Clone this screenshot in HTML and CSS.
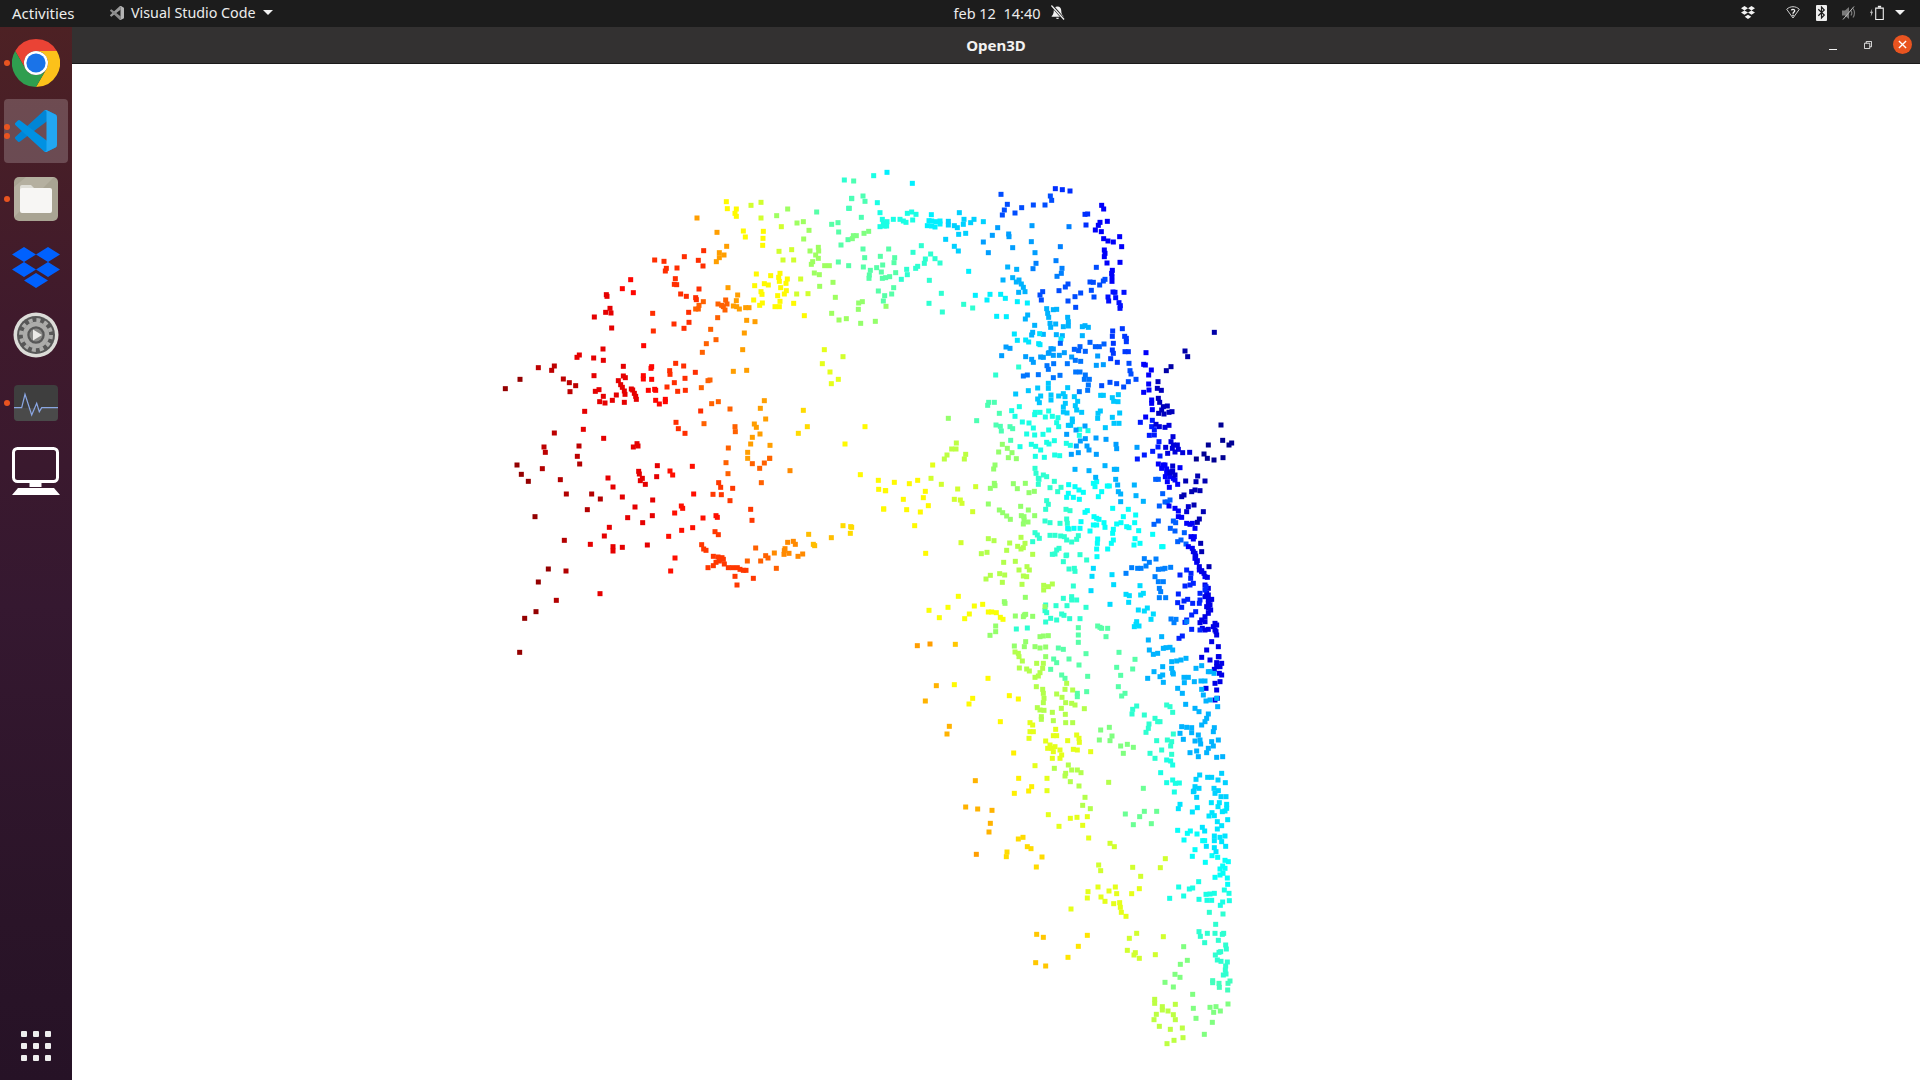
FILE: index.html
```html
<!DOCTYPE html>
<html lang="en">

<head>
    <meta charset="UTF-8" />
    <title>Open3D</title>
    <link rel="stylesheet" href="styles.css">
</head>

<body>
    <!-- Top bar -->
    <header class="topbar">
        <div class="topbar-left">
            <span class="activities">Activities</span>
            <span class="app-menu">
                <svg class="app-menu-icon" viewBox="0 0 100 100">
                    <path fill="#9a9a9a" d="M96.46 10.8 75.86.87a6.23 6.23 0 0 0-7.1 1.2L1.33 63.6a4.17 4.17 0 0 0 0 6.15l5.5 5a4.17 4.17 0 0 0 5.32.24L75 27V4.65z" />
                    <path fill="#8a8a8a" d="M75 73 12.15 25a4.17 4.17 0 0 0-5.32.24l-5.5 5a4.17 4.17 0 0 0 0 6.15l67.43 61.53a6.23 6.23 0 0 0 7.1 1.2L75 99z" />
                    <path fill="#b4b4b4" d="M75.86 99.13a6.23 6.23 0 0 1-7.1-1.2c2.3 2.3 6.24.67 6.24-2.58V4.65c0-3.25-3.94-4.88-6.24-2.58a6.23 6.23 0 0 1 7.1-1.2l20.6 9.9A6.25 6.25 0 0 1 100 16.4v67.2a6.25 6.25 0 0 1-3.54 5.63z" />
                </svg>
                Visual Studio Code
                <span class="caret"></span>
            </span>
        </div>
        <div class="clock">
            <span class="clock-text">feb 12&nbsp;&nbsp;14:40</span>
            <svg class="bell" viewBox="0 0 16 16">
                <path fill="#f2f2f2" d="M8 1.5c-2.6 0-4 2-4 4.500 0 3-1 4.500-2.200 5.700v.8h12.400v-.8C13 10.500 12 9 12 6c0-2.500-1.400-4.500-4-4.500z" />
                <path fill="#f2f2f2" d="M6.500 13.500h3a1.500 1.500 0 0 1-3 0z" />
                <path stroke="#1c1c1c" stroke-width="3" d="M1.500 0 15.500 16" />
                <path stroke="#f2f2f2" stroke-width="1.300" d="M1.500 .5 15 15.500" />
            </svg>
        </div>
        <div class="tray">
            <svg class="tray-dropbox" viewBox="0 0 14 13">
                <path fill="#f2f2f2" d="M3.500 0 7 2.200 3.500 4.400 0 2.200zM10.500 0 14 2.200 10.500 4.400 7 2.200zM3.500 4.400 7 6.600 3.500 8.800 0 6.600zM10.500 4.400 14 6.600 10.500 8.800 7 6.600zM7 8.800 10.300 10.800 7 13 3.700 10.800z" />
            </svg>
            <svg class="tray-wifi" viewBox="0 0 14 13">
                <path fill="none" stroke="#cfcfcf" stroke-width="1" d="M.7 3.300C2.500 1.600 4.600.7 7 .7s4.500.9 6.300 2.600L7 12z" />
                <path fill="none" stroke="#f2f2f2" stroke-width="1.300" d="M5.400 4.300C5.700 3.200 8.500 3 8.700 4.700 8.800 6 7 6 7 7.800" />
                <rect fill="#f2f2f2" x="6.300" y="8.700" width="1.400" height="1.400" />
            </svg>
            <span class="tray-bluetooth">
                <svg viewBox="0 0 11 15">
                    <path fill="none" stroke="#1c1c1c" stroke-width="1.200" d="M2.300 4.300 8.300 10 5.500 13V2L8.300 5 2.300 10.700" />
                </svg>
            </span>
            <svg class="tray-volume" viewBox="0 0 15 14">
                <path fill="#7a7a7a" d="M0 4.500h3L7 1v12L3 9.500H0z" />
                <path fill="none" stroke="#7a7a7a" stroke-width="1.200" d="M9 4.500c1 1.500 1 3.500 0 5M11 2.500c2 3 2 6 0 9" />
                <path stroke="#bdbdbd" stroke-width="1" d="M1 13.500 12 .5" />
            </svg>
            <span class="tray-battery">
                <svg class="bolt" viewBox="0 0 4 11">
                    <path fill="#bdbdbd" d="M3 0 0 6h1.500L1 11l3-6.500H2.300z" />
                </svg>
                <svg class="battery" viewBox="0 0 10 16">
                    <path fill="none" stroke="#f2f2f2" stroke-width="1.200" d="M.8 2.600h8.400v12.600H.8z" />
                    <rect fill="#f2f2f2" x="3.200" y="0" width="3.600" height="2" />
                </svg>
            </span>
            <span class="caret caret-tray"></span>
        </div>
    </header>

    <div class="desktop">
        <!-- Dock -->
        <nav class="dock">
            <div class="dock-item">
                <span class="dots"><i></i></span>
                <svg class="icon-chrome" viewBox="0 0 48 48">
                    <path fill="#ea4335" d="M24 0A24 24 0 0 1 44.800 12H24A12 12 0 0 0 13.600 30L3.200 12A24 24 0 0 1 24 0z" />
                    <path fill="#fcc11a" d="M44.800 12A24 24 0 0 1 24 48L34.400 30A12 12 0 0 0 24 12z" />
                    <path fill="#2f9e4f" d="M3.200 12 13.600 30A12 12 0 0 0 34.400 30L24 48A24 24 0 0 1 3.200 12z" />
                    <circle cx="24" cy="24" r="12" fill="#fff" />
                    <circle cx="24" cy="24" r="9.600" fill="#1a73e8" />
                </svg>
            </div>
            <div class="dock-item">
                <span class="dock-active"></span>
                <span class="dots"><i></i><i></i></span>
                <svg class="icon-code" viewBox="0 0 100 100">
                    <path fill="#0085d6" d="M96.460 10.800 75.860.87a6.230 6.230 0 0 0-7.100 1.200L1.330 63.600a4.170 4.170 0 0 0 0 6.150l5.500 5a4.170 4.170 0 0 0 5.320.24L93.400 13.400a4.140 4.140 0 0 1 6.600 3.300v-.24a6.250 6.250 0 0 0-3.540-5.660z" />
                    <path fill="#0091e2" d="M96.460 89.200 75.860 99.130a6.230 6.230 0 0 1-7.100-1.200L1.330 36.400a4.170 4.170 0 0 1 0-6.150l5.500-5a4.170 4.170 0 0 1 5.320-.24L93.400 86.600a4.140 4.140 0 0 0 6.600-3.300v.24a6.250 6.250 0 0 1-3.540 5.660z" />
                    <path fill="#22a7f2" d="M75.860 99.130a6.230 6.230 0 0 1-7.100-1.200c2.300 2.300 6.240.67 6.240-2.580V4.650c0-3.250-3.940-4.880-6.240-2.580a6.230 6.230 0 0 1 7.100-1.200l20.600 9.900A6.250 6.250 0 0 1 100 16.400v67.200a6.250 6.250 0 0 1-3.540 5.630z" />
                </svg>
            </div>
            <div class="dock-item">
                <span class="dots"><i></i></span>
                <svg class="icon-files" viewBox="0 0 44 44">
                    <rect width="44" height="44" rx="5" fill="#a9a493" />
                    <path fill="#b5b0a0" d="M12 0h28l-40 40V10z" />
                    <path fill="#dfded7" d="M6 10a2 2 0 0 1 2-2h9l3 3v6H6z" />
                    <rect x="6" y="11" width="32" height="25" rx="2" fill="#f7f6f4" />
                </svg>
            </div>
            <div class="dock-item">
                <svg class="icon-dropbox" viewBox="0 0 48 41">
                    <path fill="#0061fe" d="M12 0 24 7.500 12 15 0 7.500zM36 0 48 7.500 36 15 24 7.500zM12 15 24 22.500 12 30 0 22.500zM36 15 48 22.500 36 30 24 22.500zM24 26 36 33.500 24 41 12 33.500z" />
                </svg>
            </div>
            <div class="dock-item">
                <svg class="icon-settings" viewBox="0 0 46 46">
                    <circle cx="23" cy="23" r="22.500" fill="#dcdcd8" />
                    <circle cx="23" cy="23" r="19" fill="#575757" />
                    <circle cx="23" cy="23" r="15" fill="none" stroke="#acacaa" stroke-width="4" stroke-dasharray="4 3.850" />
                    <circle cx="23" cy="23" r="11" fill="none" stroke="#acacaa" stroke-width="4.500" />
                    <circle cx="23" cy="23" r="6.500" fill="#8a8a88" />
                    <path fill="#ecebe8" d="M20 17.500 29 23l-9 5.500z" />
                </svg>
            </div>
            <div class="dock-item">
                <span class="dots"><i></i></span>
                <svg class="icon-monitor" viewBox="0 0 44 36">
                    <rect width="44" height="36" rx="4" fill="#3e3e3e" />
                    <path fill="#4a4a4a" d="M0 23h44v9a4 4 0 0 1-4 4H4a4 4 0 0 1-4-4z" />
                    <path fill="none" stroke="#8aa6e2" stroke-width="1.200" d="M0 22.700H7.700L11 9.300 17.700 30 22.700 18.300 25.300 26.700 27.700 22.700H44" />
                </svg>
            </div>
            <div class="dock-item">
                <svg class="icon-display" viewBox="0 0 48 48">
                    <rect x="1.500" y="1.500" width="44" height="33" rx="4" fill="none" stroke="#fff" stroke-width="3" />
                    <rect x="17.500" y="36" width="12" height="4" fill="#fff" />
                    <path fill="#fff" d="M6 41h36l6 7H0z" />
                </svg>
            </div>
            <div class="dock-item dock-apps">
                <div class="apps-grid">
                    <i></i><i></i><i></i>
                    <i></i><i></i><i></i>
                    <i></i><i></i><i></i>
                </div>
            </div>
        </nav>

        <!-- Open3D window -->
        <main class="window">
            <div class="titlebar">
                <span class="title">Open3D</span>
                <div class="window-buttons">
                    <span class="btn-min"></span>
                    <svg class="btn-restore" viewBox="0 0 9 9">
                        <path fill="none" stroke="#f2f2f2" stroke-width="1" d="M.5 2.500h6v6h-6zM2.500 2.500v-2h6v6h-2" />
                    </svg>
                    <span class="btn-close">
                        <svg viewBox="0 0 10 10">
                            <path stroke="#fff" stroke-width="1.500" d="M1 1 9 9M9 1 1 9" />
                        </svg>
                    </span>
                </div>
            </div>
            <canvas id="cloud" class="cloud" width="1848" height="1016"></canvas>
        </main>
    </div>
    <script src="cloud.js"></script>
</body>

</html>
```

FILE: styles.css
```css
* {
    box-sizing: border-box;
}

html,
body {
    margin: 0;
    height: 100%;
    overflow: hidden;
}

body {
    display: flex;
    flex-direction: column;
    font-family: 'Noto Sans', 'Open Sans', sans-serif;
    background: #fff;
}

svg {
    display: block;
}

/* Top bar */
.topbar {
    height: 27px;
    flex-shrink: 0;
    display: grid;
    grid-template-columns: 1fr auto 1fr;
    align-items: center;
    padding-bottom: 2px;
    background: #1c1c1c;
    color: #ececec;
    font-size: 14.500px;
}

.topbar-left {
    display: flex;
    align-items: center;
    padding-left: 12px;
}

.activities {
    width: 98px;
    font-size: 15px;
}

.app-menu {
    display: flex;
    align-items: center;
    gap: 7px;
    font-size: 14.300px;
}

.app-menu-icon {
    width: 14px;
    height: 14px;
}

.caret {
    width: 0;
    height: 0;
    border-left: 5px solid transparent;
    border-right: 5px solid transparent;
    border-top: 5px solid #f2f2f2;
}

.clock {
    display: flex;
    align-items: center;
    gap: 9px;
    padding-left: 98px;
}

.bell {
    width: 15px;
    height: 15px;
}

.tray {
    display: flex;
    align-items: center;
    justify-content: flex-end;
    padding-right: 15px;
}

.tray-dropbox {
    width: 14px;
    height: 13px;
    margin-right: 31px;
}

.tray-wifi {
    width: 14px;
    height: 13px;
    margin-right: 16px;
}

.tray-bluetooth {
    width: 11px;
    height: 16px;
    margin-right: 15px;
    background: #eee;
    border-radius: 1px;
}

.tray-volume {
    width: 15px;
    height: 14px;
    margin-right: 13px;
}

.tray-battery {
    display: flex;
    align-items: center;
    gap: 2px;
    margin-right: 11px;
}

.bolt {
    width: 3px;
    height: 11px;
}

.battery {
    width: 9px;
    height: 16px;
}

/* Dock and window */
.desktop {
    flex: 1;
    display: flex;
    min-height: 0;
}

.dock {
    width: 72px;
    flex-shrink: 0;
    display: flex;
    flex-direction: column;
    padding-top: 2px;
    background: linear-gradient(180deg, #4d2124 0%, #3f1a2c 28%, #351830 55%, #2a1428 85%, #261226 100%);
}

.dock-item {
    position: relative;
    height: 68px;
    display: flex;
    align-items: center;
    justify-content: center;
}

.dock-apps {
    margin-top: auto;
}

.dock-active {
    position: absolute;
    top: 2px;
    left: 4px;
    width: 64px;
    height: 64px;
    border-radius: 4px;
    background: rgba(255, 255, 255, 0.2);
}

.dots {
    position: absolute;
    left: 4px;
    top: 0;
    bottom: 0;
    display: flex;
    flex-direction: column;
    justify-content: center;
    gap: 3px;
}

.dots i {
    display: block;
    width: 6px;
    height: 6px;
    border-radius: 50%;
    background: #e95420;
}

.icon-chrome {
    width: 48px;
    height: 48px;
}

.icon-code {
    position: relative;
    width: 42px;
    height: 42px;
}

.icon-files {
    width: 44px;
    height: 44px;
}

.icon-dropbox {
    width: 48px;
    height: 41px;
}

.icon-settings {
    width: 46px;
    height: 46px;
}

.icon-monitor {
    width: 44px;
    height: 36px;
}

.icon-display {
    width: 48px;
    height: 48px;
}

.apps-grid {
    display: grid;
    grid-template-columns: repeat(3, 6px);
    grid-auto-rows: 6px;
    gap: 6px;
}

.apps-grid i {
    display: block;
    border-radius: 1px;
    background: #eee;
}

.window {
    flex: 1;
    display: flex;
    flex-direction: column;
    min-width: 0;
}

.titlebar {
    position: relative;
    height: 37px;
    flex-shrink: 0;
    display: flex;
    align-items: center;
    justify-content: center;
    background: #333131;
    border-bottom: 1px solid #1a1a1a;
}

.title {
    color: #f2f2f2;
    font-size: 15px;
    font-weight: 700;
}

.window-buttons {
    position: absolute;
    right: 8px;
    top: 8px;
    display: flex;
    align-items: center;
}

.btn-min {
    width: 8px;
    height: 1px;
    margin: 9px 27px 0 0;
    background: #f2f2f2;
}

.btn-restore {
    width: 8px;
    height: 8px;
    margin-right: 21px;
}

.btn-close {
    width: 19px;
    height: 19px;
    display: flex;
    align-items: center;
    justify-content: center;
    border-radius: 50%;
    background: #e95420;
}

.btn-close svg {
    width: 9px;
    height: 9px;
}

.cloud {
    display: block;
    width: 1848px;
    height: 1016px;
    background: #fff;
}
```

FILE: cloud.js
```js
// Point cloud read off the Open3D view, coloured with the jet colormap.
// Each section has its own origin; the coordinates in it are 3x page pixels.
// Groups are [t, [x, y, x, y, ...]] with t being the colormap position.
const sections = [
    { ox: 490, oy: 160, groups: [
        [0.98, [46,686,90,658]],
        [0.94, [145,623,185,631,193,618,220,657,238,668,257,677,240,695,193,819,162,861,166,877,267,858,262,889]],
        [0.9, [261,592,268,585,311,594,339,567,340,601,312,647,316,694,327,689,340,709,329,725,345,729,367,721,379,705,284,754,280,808,341,835,400,619,400,648,406,653,385,662,392,674,397,682,403,693,405,703,403,727,424,687,428,690,433,700,437,709,439,718,430,861,441,851,444,858,349,404,351,409,360,445,347,457,363,459,313,471,365,504]],
        [0.87, [422,359,397,386,430,398,475,691,460,647,460,657,485,620,483,625,485,658,494,688,497,691,497,721,508,732,526,718,526,725,461,557]],
        [0.83, [488,460,490,513,494,300,522,304,529,325,526,333,561,324,557,610,581,618,539,632,540,643,553,668,585,655,531,681,563,694,586,691,616,637,632,753,558,787,565,806,585,820,552,492,582,505,597,487,596,457,556,356,553,373,560,374,572,402,589,409,617,413,619,419,627,387,583,290,625,301,639,318,641,272]],
        [0.78, [637,577,649,551,662,508,678,539,634,683,654,662,660,660,665,731,685,725,720,747,642,791,735,800,736,815,715,864,627,436,625,447,617,447,640,425,684,432,695,436,700,440,705,450,711,432,707,420,683,473]],
        [0.72, [681,217,621,174,710,259,688,278,688,293,702,285,679,305,714,383,743,405,739,422,730,438,740,440,748,447,767,443,777,443,770,481,795,485,763,519,758,569,730,634,770,631,823,722,811,745,827,777,793,792,799,802,810,822,787,832,782,852,840,856,773,877,839,895,773,895]],
        [0.66, [925,820,952,800,940,751]],
        [0.63, [709,125,712,146,739,147,735,160,739,169,760,213,766,231,820,214,819,235,818,256,799,342,842,347,794,377,823,371,835,375,870,340,866,352,868,364,872,383,892,357,888,370,889,392,883,402,813,395,816,403,791,420,817,429,809,436,863,407,870,424,855,440,868,440,911,430,943,467,1065,852]],
        [0.6, [1003,569,997,611,1020,636,1024,671,1045,658]],
        [0.58, [783,136,813,127,813,174,874,200,920,402,954,401,867,274,905,269,879,300,911,300,932,357,1059,590]],
        [0.53, [860,167,893,147,921,189,940,185,957,211,941,237,960,273,985,262,986,273,977,285,985,295,968,305,964,313,1004,317,1018,317,973,339,988,344,989,379,1029,367,1036,412,1025,460,1047,480,1069,476]],
        [0.46, [980,156,1025,193,1044,188,1046,216,1053,255,1074,239,1045,306,1076,317]],
        [0.42, [1063,60,1085,115,1076,145]]
    ] },
    { ox: 490, oy: 400, groups: [
        [0.98, [81,195,94,223,115,244,135,350,89,757,104,655,138,635,145,546,175,507]],
        [0.95, [157,206,211,239,229,282,223,421,228,513,199,601,305,282,331,297,292,329,269,192]],
        [0.9, [354,234,369,261,397,291,358,382,343,408,301,433,369,440,369,453,397,442,330,581,413,353,435,321,458,368,487,347,488,300,446,214,448,222,457,235,451,242,466,253,500,230,502,197,472,435]],
        [0.86, [540,213,548,225,536,409,575,391,608,383,554,339,574,318,578,325,639,354,555,474,542,513,611,282,607,199,678,347,682,352]],
        [0.82, [675,395,685,404,635,434,641,447,648,451,670,469,684,471,696,473,700,478,688,483,678,487,670,497,654,503,703,492,715,503,728,503,742,503,750,508,760,511,768,511,735,529,741,555,790,535,686,248,692,262,669,283,694,284,720,302,728,265,782,328,786,361]],
        [0.78, [714,221,708,188,814,248,797,444,772,483,812,483,827,467,834,474,859,505,787,191,809,205,823,189,839,175]],
        [0.74, [853,459,882,463,885,446,883,452,897,460,924,469,938,462,893,427,910,424,916,433,900,212]],
        [0.69, [956,403,970,433,974,437,1024,413]],
        [0.66, [1059,377,1082,380,1085,382,1081,400]],
        [0.63, [1111,224,1165,241,1166,268,1187,272,1181,327]]
    ] },
    { ox: 820, oy: 160, groups: [
        [0.45, [101,63,95,116,129,108,135,124,88,145,124,172]],
        [0.4, [161,47,172,128,180,158,187,178,201,185,190,190,180,200,193,198,200,198,240,178,250,183,262,160,275,156,288,163,258,187,278,180,220,178]],
        [0.36, [201,37,277,70,334,164,327,182,335,183,322,197,335,198,345,201,348,185,360,183,360,192]],
        [0.33, [385,184,385,195,403,197,412,203,418,158,432,178,430,193,452,188,462,178,490,185,416,223,437,220,377,238,403,259,415,273]],
        [0.28, [533,203,517,226,490,246,505,278,566,222,567,230,578,263,636,197,634,245,645,278]],
        [0.2, [543,103,562,133,553,150,547,165,585,159,605,143,640,135,675,135,691,108,695,121]],
        [0.25, [747,200,721,260,708,302,648,310,726,325,724,340,711,349,639,326]],
        [0.17, [706,86,727,89,750,93,798,195,795,163,803,162]],
        [0.12, [845,136,851,147,840,187,835,196,826,210,844,215,851,236,864,243,880,246,862,184,899,230,905,260,853,270,855,280,853,290,900,307,861,309,877,331,875,340,876,350,876,364]],
        [0.2, [829,322,855,358,850,363,839,375,810,366,820,367,814,391,822,411,782,399,765,410,744,372,736,381,717,392,668,395,660,405,664,420,744,423,767,442]],
        [0.14, [879,396,885,397,912,397,864,411,866,423,887,413,897,428,901,437,900,445]],
        [0.3, [563,321,590,328,549,360,578,353,597,360,589,366,604,372,610,382,596,397,615,395]],
        [0.36, [446,334,542,403,556,415,510,403,466,406,501,420,592,425,622,429,530,469,559,470]],
        [0.42, [364,400,431,433,458,444,367,456,327,430,328,361,304,257,279,277,332,282,345,296,360,309,316,297,313,310,293,319,287,325,260,328,262,344,244,358]],
        [0.46, [206,267,129,267,134,293,181,289,224,293,222,308,188,315,170,323,151,331,148,345,147,355,187,355,197,353,209,350,227,338,184,336,130,321,221,383,175,393,194,407,215,402,190,423]],
        [0.5, [97,236,109,227,132,220,146,214,100,227]],
        [0.52, [198,439,127,425,116,429,115,448,166,484,122,490]],
        [0.3, [623,465,616,477,644,496,680,446,683,460,686,472,700,449,710,448,690,490,692,502,707,492,743,472,745,485,730,500,745,498,787,500,795,497,805,502,727,527,709,524,787,527,670,523,638,517,635,525]],
        [0.35, [583,522,659,521,723,537,592,541,617,540,626,546,656,551,660,554]],
        [0.22, [721,550,763,568,776,572,796,574,810,547,852,552,838,560,826,560,780,560]],
        [0.18, [878,513,877,529,907,506,914,529,919,535,919,545,880,550,877,570,880,580,872,596,892,607,915,575,925,575]],
        [0.28, [833,588,829,616,850,614,755,591,733,578,718,586,700,586,687,578,693,566,700,567,685,580,670,592,662,591,640,607,635,598,617,590,558,561,570,565,545,587]],
        [0.24, [782,604,742,611,766,601,701,611,681,617,685,628,720,646,700,653,655,644,622,645,610,648,767,636,780,636,796,645,793,658,808,658,805,675,803,691,778,695]],
        [0.42, [596,621,527,645]],
        [0.2, [927,610,930,632,933,642,948,658,925,665,890,671,870,667,911,681,845,677]],
        [0.32, [685,670,685,685,653,684,625,692,587,702,662,708,653,717,658,728,693,705,693,720,716,708,730,701,735,710,743,683,763,710,773,724,850,706,842,706,736,730,730,741,766,737,770,750,785,757,730,756,741,759,757,777,757,785,745,796,752,796,833,775,841,753,834,760,877,772,882,790,897,790,899,759,894,725,895,704,877,713,881,724,856,803]],
        [0.4, [598,740,575,752,585,769,646,757,660,757,644,764,676,771,686,753,697,769,714,773,710,788,716,800,607,786,627,789,640,804,644,825,620,822,669,823,686,810,779,808,804,812,778,826]],
        [0.45, [506,727,523,727,503,736,538,760,528,795,541,799,544,813,570,800,578,806,470,782,572,841]],
        [0.28, [740,823,795,798,768,810,796,836,781,843,828,834,858,838,769,858,829,883,888,853,890,866,951,862,775,878,754,883,807,870,801,858]],
        [0.4, [751,856,739,850,680,847,703,842,687,852,600,860,634,853,647,859,662,870,704,885,719,887,646,889,673,892]],
        [0.52, [385,775,547,853,536,876,562,865,576,878,565,893,589,896]],
        [0.56, [409,849,395,867,408,867,381,885,437,883,373,897,433,897]],
        [0.63, [135,800]],
        [0.12, [978,578,971,613,976,615,994,630,986,645,986,672,987,690,971,697,995,720,995,730,997,749,977,771]],
        [0.06, [1014,665,1012,685,1024,691,1015,715,1019,727,1030,740,1042,738,1025,750,1056,755,1047,757,1016,760,1032,762]],
        [0.15, [961,787,997,781,995,800,1003,809,988,826,1003,825,1017,845,1020,888,1014,861,998,874,973,885,952,897]],
        [0.09, [1008,793,1018,800,1035,802,1047,796,1059,830,1053,845,1037,862,1057,865,1060,855,1072,855,1075,868,1065,876,1088,878,1043,880,1109,877]],
        [0.04, [1039,632,1053,620,1095,573,1103,590,1183,517]],
        [0.02, [1203,795,1208,841,1235,849,1227,855,1165,855,1152,882,1162,895,1129,897,1182,900,1209,893]]
    ] },
    { ox: 880, oy: 440, groups: [
        [0.6, [158,75]],
        [0.63, [43,127,88,131,113,121,16,152,136,154,70,178,130,173,11,207,80,209,121,216,145,197,104,257,137,340]],
        [0.58, [153,115,184,133,233,147,223,178,241,180,246,190,243,308,278,215,287,140]],
        [0.52, [343,130,345,137,331,145,341,87,345,75,325,192,400,131,412,146,436,130,447,158,463,154,358,210,368,218,380,228,391,238,422,199,445,210,424,227,432,230,432,240,430,252,444,246,464,227]],
        [0.55, [325,296,342,302,389,309,423,292,435,310,413,319,423,327,430,323,380,331,304,341,321,337,458,343,371,367,406,364,441,380,448,390,417,390,331,406,318,417,359,401,374,405,367,427,430,408,440,410,426,433,491,436,491,450,505,440,517,432]],
        [0.42, [465,85,468,100,475,115,490,105,500,110,477,118,523,124,475,133,510,143,543,142,533,155,500,182,505,193,497,208,558,208,570,212,495,243,510,248,540,250,560,237,562,250,567,267,465,278,472,285,478,295,458,305,510,286,525,286,542,288,553,290,560,300,575,306,595,287,590,298,537,325,530,330,517,343,525,342,558,347,560,345,600,344,620,360,550,365,567,387,585,394,583,385]],
        [0.38, [566,134,585,140,597,150,610,157,650,125,665,155,640,130,645,140,655,170,682,138,688,138,565,160,560,172,580,172,598,178,615,217,622,212,642,230,650,235,657,238,672,248,640,255,650,255,675,262,603,245,563,265,582,265,600,265,630,273,700,268,698,280,653,297,652,310,650,327,651,350,683,327,694,310,700,300,710,252,723,248,730,230,745,208,740,260,747,263,764,248,767,225,698,205,776,272,818,283,765,296,762,315,780,310,845,320,849,320]],
        [0.3, [627,92,647,112,675,77,707,118,703,88,710,88,713,135,715,155,722,162,722,185,763,135,768,167,790,184,585,88]],
        [0.22, [827,118,835,118,848,161,838,198,855,186,862,186,870,180,822,253,835,243,880,243,887,248,871,265,885,273,913,278,893,305,903,300,918,312]],
        [0.12, [850,75,845,85,860,87,856,110,862,125,868,142,900,83,893,133,885,120,867,198,885,205,895,213,895,230,905,232,920,250,930,253,937,250,945,265,943,290,940,297,933,290,925,320,937,325,945,340,945,355,950,367,958,390,975,410,965,395,860,100,875,95,870,110,880,115,855,75,835,72]],
        [0.05, [905,170,912,165,935,155,945,150,960,152,953,108,948,125,975,123,917,123,942,195,970,215,958,237,952,247,962,310,965,335,987,380]],
        [0.08, [925,200,920,215,878,93,885,105,878,78,870,98]],
        [0.1, [985,465,990,480,985,490,985,505,975,545,960,548,967,565,1005,550,1008,575,1010,585,975,570,985,568,995,605,1015,620,980,630,965,652,990,660,1017,650,1025,670,1010,680,1003,688,1025,705,1020,725,1005,730,1010,750,978,745,940,335,947,348,952,362,958,380,965,392,972,400,982,412,975,435,985,445,980,460,975,470,985,478,995,478,990,495,980,500,992,510,985,520,975,530,965,540,1000,560,1010,555,1005,570,1015,650,1010,668,1020,680,1018,700,1012,775,1005,780]],
        [0.16, [920,390,900,405,933,400,932,415,940,430,915,438,930,435,960,480,958,490,978,440,975,450,960,460,895,462,923,478,912,483,893,488,905,502,938,490,947,515,935,525,920,540,915,547,935,568,897,595,907,588,960,570]],
        [0.25, [872,382,855,385,848,387,835,388,828,357,793,356,808,367,798,378,783,385,773,385,755,383,738,400,850,425,835,425,825,410,838,445,842,455,838,473,857,473,888,538,873,537,882,548,920,545]],
        [0.3, [845,590,805,600,808,630,820,643,833,640,850,625,858,623,878,630,870,622,875,665,890,663,903,660,918,655,948,685,965,677,985,695,990,695,1002,700,875,685,878,698,880,702,848,680,822,695,848,705,840,710,803,715,850,727,893,745,907,760,912,712,925,712,913,728,943,725,963,723,975,723,965,748,970,765,978,783,990,780,1010,775,1013,800,917,793,945,805,957,815,985,822,980,835,975,845,965,855,1003,863,1000,875,935,863,920,862,905,860,900,880,935,878,955,885,910,898,945,903,960,900,962,912,985,925,1015,900,995,905,1000,918,930,938,950,933,980,938,955,950,1028,950,1010,952]],
        [0.34, [775,510,793,513,802,504,820,522,813,538,770,545,768,553,763,560,777,558,738,463,748,467,746,487,780,437,782,465,790,460,690,493,696,404,701,434,640,385,636,409,633,452]],
        [0.42, [580,438,618,502,600,536,569,536,552,526,530,540,512,535,545,522,590,480,575,470,575,480,550,475,561,497,528,497,497,495,495,512,500,518,497,546,442,564,409,567]],
        [0.46, [595,563,595,585,595,607,653,558,660,562,665,565,683,565,678,590,618,641,717,637,765,658,597,675,710,682,758,687,722,706,623,709,715,740,735,760,725,768,620,755,592,760,592,770,512,688,530,668,521,657,535,624,550,628,567,657,545,705,555,715]],
        [0.52, [436,472,373,485,375,490,406,528,430,530,437,523,433,525,458,529,495,500,347,558,347,575,330,586,480,590,490,588,505,587,403,618,437,605,433,620,465,620,480,624,497,621,497,650]],
        [0.55, [405,636,415,640,417,650,427,663,418,684,440,687,448,693,470,670,490,670,488,685,480,698,465,712,475,708,469,740,488,748,490,760,492,775,490,788,560,730,555,748,530,762,546,772,578,750,557,788,575,790,585,795,472,803,480,810,492,811,517,817,484,830,484,838,544,805,613,806,556,823,578,848,557,848,520,842]],
        [0.6, [450,848,458,855,450,875,460,875,447,895,520,887,530,887,527,868,497,903,563,902,590,885,597,895,598,907,580,928,592,930,510,915,525,920,503,925,520,935,515,925,540,930,545,945,540,955,517,955,632,935]],
        [0.5, [662,870,688,862,696,888,690,902,658,900,722,918,742,913,760,922,730,940]],
        [0.42, [756,822,758,808,770,798,793,825,807,852,805,865,798,877,825,835,833,845,840,845,860,795,870,800,878,817,880,882,830,902,862,900,875,905,872,918,810,940,825,955,845,930,875,943]],
        [0.62, [235,469,204,502,147,511,178,533,254,536,268,522,283,498,308,493,325,516,335,516,349,518,361,532,369,538]],
        [0.72, [150,612,112,617]],
        [0.68, [226,613]],
        [0.63, [361,845,388,767,415,777,324,715,278,775,267,792,223,734]],
        [0.7, [169,737,136,783,208,859,201,882]],
        [0.64, [401,939]]
    ] },
    { ox: 900, oy: 750, groups: [
        [0.64, [356,85,343,130,395,110,386,123]],
        [0.7, [226,92,197,171,233,177,276,181,271,220,267,246]],
        [0.66, [355,267,369,262,382,290,393,296,321,306,319,320,426,321,409,351]],
        [0.72, [229,313]],
        [0.6, [405,47,441,85,441,122,445,194,477,229,511,205,531,202,562,200,548,226,566,264]],
        [0.55, [463,55,505,45,515,60,532,60,543,68,497,70,495,78,511,95,537,108,555,142,548,166,571,176,626,97]],
        [0.48, [676,192,733,184,770,184,719,200,700,224,754,221,730,115]],
        [0.58, [630,280,643,290,596,345,602,362,698,352,781,353,722,379,796,326]],
        [0.6, [594,411,564,425,562,444,603,441,615,454,627,423,650,431,646,411,641,461,659,458,661,472,664,487,678,499,695,431,718,416,513,477]],
        [0.68, [410,553,430,562,407,638,437,648]],
        [0.65, [562,556,535,589,504,622]],
        [0.58, [688,565,710,550,682,601,706,608,702,615,718,625,766,614,790,560]],
        [0.5, [851,590,841,643,862,631,825,673,840,682,795,697,820,711,878,733]],
        [0.56, [764,748,764,760,787,770,787,780,804,783,826,763,820,794,826,809,769,793,762,809,778,829,811,838,847,834,849,863,822,871,801,881]],
        [0.5, [880,775,888,805,937,817,913,853,930,772,948,770,941,787,961,783,984,762]],
        [0.44, [938,692,938,698,957,700,958,712,983,720,990,693,984,700]],
        [0.42, [970,675,978,672,976,660,977,648,982,636,963,634,952,630,957,607,946,615,962,605,977,585,979,597,955,571,971,550,967,553,945,550,922,550,914,578,897,545,901,559,947,523,969,492,928,487]],
        [0.4, [961,466,968,456,988,452,987,430,973,420,943,430,930,432,918,433,921,451,935,451,897,448,851,438,809,445,836,411,868,417,878,414,896,395]],
        [0.38, [945,382,960,375,969,370,982,384,983,403,960,357,975,355,968,348,985,335,975,331,953,322,936,317,916,337,877,319,885,299,852,270,908,272,914,272,891,252,862,250,871,243,833,241]],
        [0.35, [907,232,914,243,943,258,943,272,960,262,975,258,965,275,977,289,943,293,948,305,919,289,952,215,965,227,952,237,927,198,943,197,936,188,967,185,975,183,980,175,983,209,958,158,954,170,934,158,980,163,892,173,877,186,840,163,835,176]],
        [0.4, [818,45,800,30,812,33,782,68,800,98,818,90,826,100,838,99,823,126]],
        [0.33, [899,75,888,88,880,125,882,123,890,142,923,82,935,82,942,115,945,130,955,122,963,140,978,140,965,70,976,98,954,90,885,110,897,115]]
    ] }
];

// canvas sits at page offset (72, 64)
const CANVAS_X = 72;
const CANVAS_Y = 64;
const POINT_SIZE = 5;

const clamp = v => Math.round(Math.min(1, Math.max(0, v)) * 255);

const jet = t => {
    const r = clamp(1.5 - Math.abs(4 * t - 3));
    const g = clamp(1.5 - Math.abs(4 * t - 2));
    const b = clamp(1.5 - Math.abs(4 * t - 1));
    return `rgb(${r}, ${g}, ${b})`;
};

const ctx = document.getElementById('cloud').getContext('2d');

sections.forEach(section => {
    section.groups.forEach(([t, pts]) => {
        ctx.fillStyle = jet(t);
        for (let i = 0; i < pts.length; i += 2) {
            const x = section.ox + pts[i] / 3 - CANVAS_X - POINT_SIZE / 2;
            const y = section.oy + pts[i + 1] / 3 - CANVAS_Y - POINT_SIZE / 2;
            ctx.fillRect(x, y, POINT_SIZE, POINT_SIZE);
        }
    });
});
```
